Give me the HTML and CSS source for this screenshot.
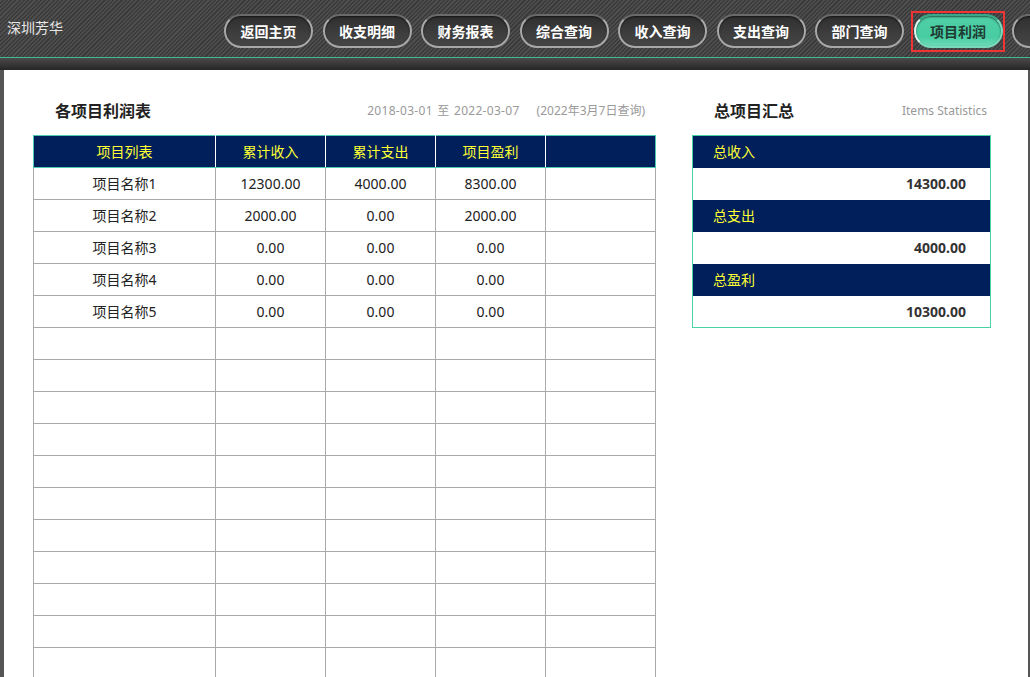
FILE: index.html
```html
<!DOCTYPE html>
<html lang="zh-CN">
<head>
<meta charset="utf-8">
<title>项目利润</title>
<link rel="stylesheet" href="styles.css">
</head>
<body>
<header class="topbar">
  <div class="brand">深圳芳华</div>
  <nav class="nav">
    <a class="btn">返回主页</a>
    <a class="btn">收支明细</a>
    <a class="btn">财务报表</a>
    <a class="btn">综合查询</a>
    <a class="btn">收入查询</a>
    <a class="btn">支出查询</a>
    <a class="btn">部门查询</a>
    <a class="btn active">项目利润</a>
    <a class="btn"></a>
  </nav>
</header>
<div class="topline"></div>
<div class="subbar"></div>
<main class="main">
  <section class="left">
    <div class="title-row">
      <h2 class="title">各项目利润表</h2>
      <span class="meta"><span class="range">2018-03-01 至 2022-03-07</span><span class="asof">(2022年3月7日查询)</span></span>
    </div>
    <table class="grid">
      <colgroup>
        <col class="c1"><col class="c2"><col class="c2"><col class="c2"><col class="c2">
      </colgroup>
      <thead>
        <tr><th>项目列表</th><th>累计收入</th><th>累计支出</th><th>项目盈利</th><th></th></tr>
      </thead>
      <tbody>
        <tr><td>项目名称1</td><td>12300.00</td><td>4000.00</td><td>8300.00</td><td></td></tr>
        <tr><td>项目名称2</td><td>2000.00</td><td>0.00</td><td>2000.00</td><td></td></tr>
        <tr><td>项目名称3</td><td>0.00</td><td>0.00</td><td>0.00</td><td></td></tr>
        <tr><td>项目名称4</td><td>0.00</td><td>0.00</td><td>0.00</td><td></td></tr>
        <tr><td>项目名称5</td><td>0.00</td><td>0.00</td><td>0.00</td><td></td></tr>
        <tr><td></td><td></td><td></td><td></td><td></td></tr>
        <tr><td></td><td></td><td></td><td></td><td></td></tr>
        <tr><td></td><td></td><td></td><td></td><td></td></tr>
        <tr><td></td><td></td><td></td><td></td><td></td></tr>
        <tr><td></td><td></td><td></td><td></td><td></td></tr>
        <tr><td></td><td></td><td></td><td></td><td></td></tr>
        <tr><td></td><td></td><td></td><td></td><td></td></tr>
        <tr><td></td><td></td><td></td><td></td><td></td></tr>
        <tr><td></td><td></td><td></td><td></td><td></td></tr>
        <tr><td></td><td></td><td></td><td></td><td></td></tr>
        <tr><td></td><td></td><td></td><td></td><td></td></tr>
        <tr><td></td><td></td><td></td><td></td><td></td></tr>
        <tr><td></td><td></td><td></td><td></td><td></td></tr>
      </tbody>
    </table>
  </section>
  <section class="right">
    <div class="title-row title-row-right">
      <h2 class="title">总项目汇总</h2>
      <span class="meta">Items Statistics</span>
    </div>
    <div class="summary">
      <div class="s-label">总收入</div>
      <div class="s-value">14300.00</div>
      <div class="s-label">总支出</div>
      <div class="s-value">4000.00</div>
      <div class="s-label">总盈利</div>
      <div class="s-value">10300.00</div>
    </div>
  </section>
</main>
</body>
</html>
```
FILE: styles.css
```css
html, body {
  margin: 0;
  padding: 0;
}
body {
  background: #555555;
  font-family: "Noto Sans", "Noto Sans CJK SC", sans-serif;
  color: #222;
  height: 677px;
  overflow: hidden;
}
.topbar {
  height: 57px;
  display: flex;
  align-items: center;
  padding-left: 7px;
  overflow: hidden;
  background-color: #444;
  background-image: repeating-linear-gradient(135deg, #4e4e4e 0 1.5px, #3b3b3b 1.5px 3px);
}
.brand {
  flex: 0 0 217px;
  color: #e6e6e6;
  font-size: 14px;
  margin-top: -3px;
  font-family: "Noto Sans CJK SC", sans-serif;
}
.nav {
  display: flex;
  gap: 9.5px;
  flex-wrap: nowrap;
  margin-top: 4px;
}
.btn {
  position: relative;
  flex: 0 0 auto;
  box-sizing: border-box;
  width: 89px;
  height: 34px;
  border-radius: 17px;
  border: 2px solid #a8a8a8;
  border-top-color: #6a6a6a;
  background: linear-gradient(#2f2f2f, #3e3e3e 60%, #454545);
  box-shadow: inset 0 1px 2px rgba(0,0,0,0.6);
  color: #fff;
  font-family: "Noto Sans CJK SC", sans-serif;
  font-weight: bold;
  font-size: 14px;
  line-height: 30px;
  text-align: center;
  white-space: nowrap;
}
.btn.active {
  background: linear-gradient(#4fcfa6, #48cca2 70%, #6ddab8);
  border-color: #7ad8bb;
  border-top-color: #3aa888;
  border-left-color: #e0f5ee;
  color: #1f3a32;
}
.btn.active::after {
  content: "";
  position: absolute;
  top: -5px;
  left: -5px;
  right: -4px;
  bottom: -6px;
  border: 2px solid #ee3434;
}
.topline {
  height: 1px;
  background: #3fbb8e;
}
.subbar {
  height: 12px;
  background: linear-gradient(#4a4a4a, #262626);
}
.main {
  margin: 0 2px 0 4px;
  background: #fff;
  height: 607px;
  display: flex;
  gap: 36px;
  padding: 30px 0 0 29px;
  box-sizing: border-box;
  overflow: hidden;
}
.left {
  width: 623px;
  flex: 0 0 623px;
}
.right {
  width: 299px;
  flex: 0 0 299px;
}
.title-row {
  height: 20px;
  display: flex;
  align-items: center;
  justify-content: space-between;
  padding: 0 11px 0 22px;
  margin-bottom: 15px;
}
.title-row-right {
  padding: 0 4px 0 22px;
}
.title {
  margin: 0;
  font-size: 16px;
  font-weight: bold;
  color: #222;
  font-family: "Noto Sans CJK SC", sans-serif;
}
.meta {
  font-size: 12px;
  color: #999;
}
.range {
  word-spacing: 1px;
  letter-spacing: 0.3px;
  margin-right: 17px;
}
.grid {
  width: 623px;
  border-collapse: collapse;
  table-layout: fixed;
  font-size: 14px;
}
.c1 { width: 182px; }
.c2 { width: 110px; }
.grid th {
  height: 29px;
  padding: 0 0 2px;
  background: #001f5b;
  color: #ffff33;
  font-weight: normal;
  font-family: "Noto Sans CJK SC", sans-serif;
  border: 1px solid #fff;
  border-top-color: #4cc9b0;
  border-bottom-color: #4cc9b0;
}
.grid th:first-child { border-left-color: #4cc9b0; }
.grid th:last-child { border-right-color: #4cc9b0; }
.grid td {
  height: 30px;
  padding: 0 0 1px;
  text-align: center;
  border: 1px solid #aaaaaa;
  color: #222;
}
.summary {
  border: 1px solid #4cd3a5;
  width: 299px;
  box-sizing: border-box;
}
.s-label {
  height: 32px;
  line-height: 30px;
  background: #001f5b;
  color: #ffff33;
  font-size: 14px;
  padding-left: 20px;
  font-family: "Noto Sans CJK SC", sans-serif;
}
.s-value {
  height: 32px;
  line-height: 31px;
  text-align: right;
  padding-right: 24px;
  font-weight: bold;
  font-size: 14px;
  color: #333;
}
.summary .s-value:last-child {
  height: 31px;
}
```
